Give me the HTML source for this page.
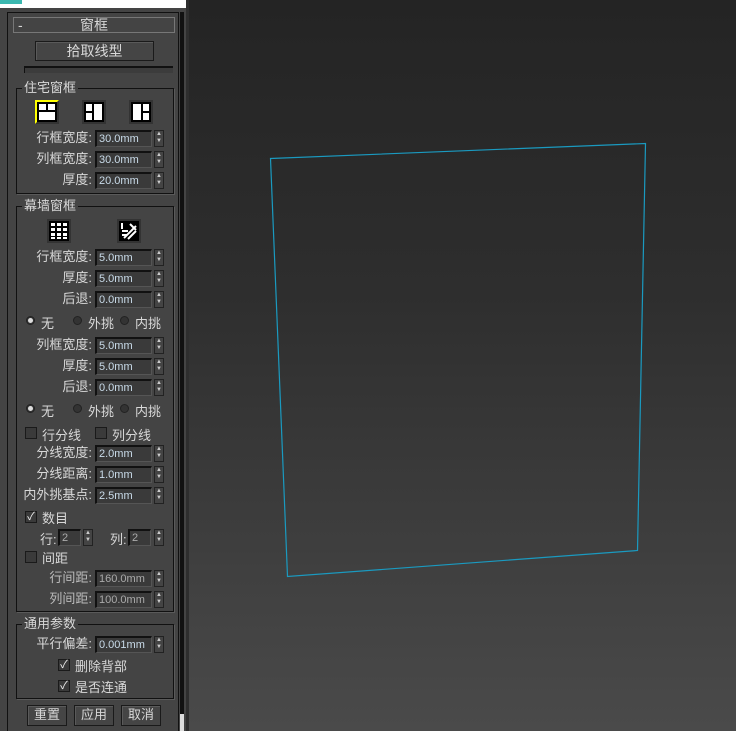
<!DOCTYPE html>
<html><head><meta charset="utf-8"><style>
*{margin:0;padding:0;box-sizing:border-box}
body{width:736px;height:731px;overflow:hidden;background:#444;font-family:"Liberation Sans","Noto Sans CJK SC",sans-serif;font-size:13px;color:#d8d8d8;position:relative}
.a{position:absolute}
#vp{left:189px;top:0;width:547px;height:731px;background:linear-gradient(#242424,#2e2e2e 40%,#4a4a4a)}
.grp{position:absolute;border:1px solid #111;box-shadow:1px 1px 0 #5a5a5a}
.leg{position:absolute;top:-9px;left:5px;background:#444;padding:0 2px;line-height:15px}
.lb{position:absolute;text-align:right;width:91px;line-height:16px}
.in{position:absolute;width:57px;height:17px;background:#3a3a3a;border-top:2px solid #111;border-left:2px solid #111;border-right:1px solid #555;border-bottom:1px solid #555;color:#c9dbe9;font-size:11px;line-height:14px;padding-left:2px}
.sp{position:absolute;width:10px;height:17px;background:#444;border:1px solid #222;font-size:6px;line-height:7px;text-align:center;color:#ccc}
.btn{position:absolute;background:#454545;border:1px solid #1a1a1a;box-shadow:inset 1px 1px 0 #5a5a5a;text-align:center;line-height:18px;font-size:13px}
.rad{position:absolute;width:9px;height:9px;border-radius:50%;background:#333;border:1px solid #222}
.rad.on::after{content:"";position:absolute;left:1px;top:1px;width:5px;height:5px;border-radius:50%;background:#ddd}
.cb{position:absolute;width:12px;height:12px;background:#3a3a3a;border:1px solid #1a1a1a;font-size:11px;line-height:11px;text-align:center;color:#eee}
.ic{position:absolute;width:24px;height:24px;background:#000;border:2px solid #333}
</style></head><body>
<div class="a" style="left:0;top:0;width:188px;height:8px;background:#fff"></div>
<div class="a" style="left:0;top:0;width:22px;height:4px;background:#3bb8b0"></div>
<div class="a" style="left:7px;top:12px;width:172px;height:719px;border:1px solid #111;border-bottom:none"></div>
<div class="a" style="left:180px;top:12px;width:4px;height:719px;background:#111"></div>
<div class="a" style="left:180px;top:714px;width:4px;height:17px;background:#ddd"></div>
<div class="a" style="left:186px;top:0;width:3px;height:731px;background:#2e2e2e"></div>
<div id="vp" class="a"></div>
<svg class="a" style="left:0;top:0" width="736" height="731"><polygon points="270.5,158.5 645.5,143.5 637.5,550.5 287.5,576.5" fill="none" stroke="#1a9ac0" stroke-width="1.2"/></svg>

<div class="a" style="left:13px;top:17px;width:162px;height:16px;border:1px solid #777;line-height:14px;font-size:14px"><span style="position:absolute;left:4px">-</span><span style="position:absolute;left:0;right:0;text-align:center">窗框</span></div>
<div class="btn" style="left:35px;top:41px;width:119px;height:20px;font-size:14px">拾取线型</div>
<div class="a" style="left:24px;top:66px;width:149px;height:7px;border-top:2px solid #111;border-left:1px solid #111;background:#3c3c3c"></div>

<div class="grp" style="left:16px;top:88px;width:158px;height:106px"><div class="leg">住宅窗框</div></div>
<div class="ic" style="left:35px;top:100px;border-color:#ff0;border-right-color:#333;border-bottom-color:#333"><svg width="20" height="20"><rect x="2" y="2" width="7" height="6" fill="#fff"/><rect x="11" y="2" width="7" height="6" fill="#fff"/><rect x="2" y="10" width="16" height="8" fill="#fff"/></svg></div>
<div class="ic" style="left:82px;top:100px"><svg width="20" height="20"><rect x="2" y="2" width="6" height="7" fill="#fff"/><rect x="2" y="11" width="6" height="7" fill="#fff"/><rect x="10" y="2" width="8" height="16" fill="#fff"/></svg></div>
<div class="ic" style="left:129px;top:100px"><svg width="20" height="20"><rect x="2" y="2" width="8" height="16" fill="#fff"/><rect x="12" y="2" width="6" height="7" fill="#fff"/><rect x="12" y="11" width="6" height="7" fill="#fff"/></svg></div>

<div class="lb" style="left:1px;top:130px">行框宽度:</div><div class="in" style="left:95px;top:130px">30.0mm</div><div class="sp" style="left:154px;top:130px">▲<br>▼</div>
<div class="lb" style="left:1px;top:151px">列框宽度:</div><div class="in" style="left:95px;top:151px">30.0mm</div><div class="sp" style="left:154px;top:151px">▲<br>▼</div>
<div class="lb" style="left:1px;top:172px">厚度:</div><div class="in" style="left:95px;top:172px">20.0mm</div><div class="sp" style="left:154px;top:172px">▲<br>▼</div>

<div class="grp" style="left:16px;top:206px;width:158px;height:406px"><div class="leg">幕墙窗框</div></div>
<div class="ic" style="left:47px;top:219px"><svg width="20" height="20" fill="#fff"><rect x="2" y="2" width="4" height="3"/><rect x="8" y="2" width="4" height="3"/><rect x="14" y="2" width="4" height="3"/><rect x="2" y="7" width="4" height="3"/><rect x="8" y="7" width="4" height="3"/><rect x="14" y="7" width="4" height="3"/><rect x="2" y="12" width="4" height="3"/><rect x="8" y="12" width="4" height="3"/><rect x="14" y="12" width="4" height="3"/><rect x="2" y="16" width="4" height="2"/><rect x="8" y="16" width="4" height="2"/><rect x="14" y="16" width="4" height="2"/></svg></div>
<div class="ic" style="left:117px;top:219px"><svg width="20" height="20" fill="none" stroke="#fff" stroke-width="2"><path d="M3 2v6M3 10h6M11 3l6 6M5 17l12-12M9 18l8-8M3 14h5"/></svg></div>

<div class="lb" style="left:1px;top:249px">行框宽度:</div><div class="in" style="left:95px;top:249px">5.0mm</div><div class="sp" style="left:154px;top:249px">▲<br>▼</div>
<div class="lb" style="left:1px;top:270px">厚度:</div><div class="in" style="left:95px;top:270px">5.0mm</div><div class="sp" style="left:154px;top:270px">▲<br>▼</div>
<div class="lb" style="left:1px;top:291px">后退:</div><div class="in" style="left:95px;top:291px">0.0mm</div><div class="sp" style="left:154px;top:291px">▲<br>▼</div>
<div class="rad on" style="left:26px;top:316px"></div><div class="a" style="left:41px;top:313px">无</div>
<div class="rad" style="left:73px;top:316px"></div><div class="a" style="left:88px;top:313px">外挑</div>
<div class="rad" style="left:120px;top:316px"></div><div class="a" style="left:135px;top:313px">内挑</div>
<div class="lb" style="left:1px;top:337px">列框宽度:</div><div class="in" style="left:95px;top:337px">5.0mm</div><div class="sp" style="left:154px;top:337px">▲<br>▼</div>
<div class="lb" style="left:1px;top:358px">厚度:</div><div class="in" style="left:95px;top:358px">5.0mm</div><div class="sp" style="left:154px;top:358px">▲<br>▼</div>
<div class="lb" style="left:1px;top:379px">后退:</div><div class="in" style="left:95px;top:379px">0.0mm</div><div class="sp" style="left:154px;top:379px">▲<br>▼</div>
<div class="rad on" style="left:26px;top:404px"></div><div class="a" style="left:41px;top:401px">无</div>
<div class="rad" style="left:73px;top:404px"></div><div class="a" style="left:88px;top:401px">外挑</div>
<div class="rad" style="left:120px;top:404px"></div><div class="a" style="left:135px;top:401px">内挑</div>
<div class="cb" style="left:25px;top:427px"></div><div class="a" style="left:42px;top:425px">行分线</div>
<div class="cb" style="left:95px;top:427px"></div><div class="a" style="left:112px;top:425px">列分线</div>
<div class="lb" style="left:1px;top:445px">分线宽度:</div><div class="in" style="left:95px;top:445px">2.0mm</div><div class="sp" style="left:154px;top:445px">▲<br>▼</div>
<div class="lb" style="left:1px;top:466px">分线距离:</div><div class="in" style="left:95px;top:466px">1.0mm</div><div class="sp" style="left:154px;top:466px">▲<br>▼</div>
<div class="lb" style="left:1px;top:487px">内外挑基点:</div><div class="in" style="left:95px;top:487px">2.5mm</div><div class="sp" style="left:154px;top:487px">▲<br>▼</div>
<div class="cb" style="left:25px;top:511px">✓</div><div class="a" style="left:42px;top:508px">数目</div>
<div class="a" style="left:40px;top:529px">行:</div><div class="in" style="left:58px;top:529px;width:23px;color:#aaa">2</div><div class="sp" style="left:83px;top:529px">▲<br>▼</div>
<div class="a" style="left:110px;top:529px">列:</div><div class="in" style="left:128px;top:529px;width:23px;color:#aaa">2</div><div class="sp" style="left:154px;top:529px">▲<br>▼</div>
<div class="cb" style="left:25px;top:551px"></div><div class="a" style="left:42px;top:548px">间距</div>
<div class="lb" style="left:1px;top:570px;color:#bbb">行间距:</div><div class="in" style="left:95px;top:570px;color:#aaa">160.0mm</div><div class="sp" style="left:154px;top:570px">▲<br>▼</div>
<div class="lb" style="left:1px;top:591px;color:#bbb">列间距:</div><div class="in" style="left:95px;top:591px;color:#aaa">100.0mm</div><div class="sp" style="left:154px;top:591px">▲<br>▼</div>

<div class="grp" style="left:16px;top:624px;width:158px;height:75px"><div class="leg">通用参数</div></div>
<div class="lb" style="left:1px;top:636px">平行偏差:</div><div class="in" style="left:95px;top:636px">0.001mm</div><div class="sp" style="left:154px;top:636px">▲<br>▼</div>
<div class="cb" style="left:58px;top:659px">✓</div><div class="a" style="left:75px;top:656px">删除背部</div>
<div class="cb" style="left:58px;top:680px">✓</div><div class="a" style="left:75px;top:677px">是否连通</div>

<div class="btn" style="left:27px;top:705px;width:40px;height:21px">重置</div>
<div class="btn" style="left:74px;top:705px;width:40px;height:21px">应用</div>
<div class="btn" style="left:121px;top:705px;width:40px;height:21px">取消</div>
</body></html>
